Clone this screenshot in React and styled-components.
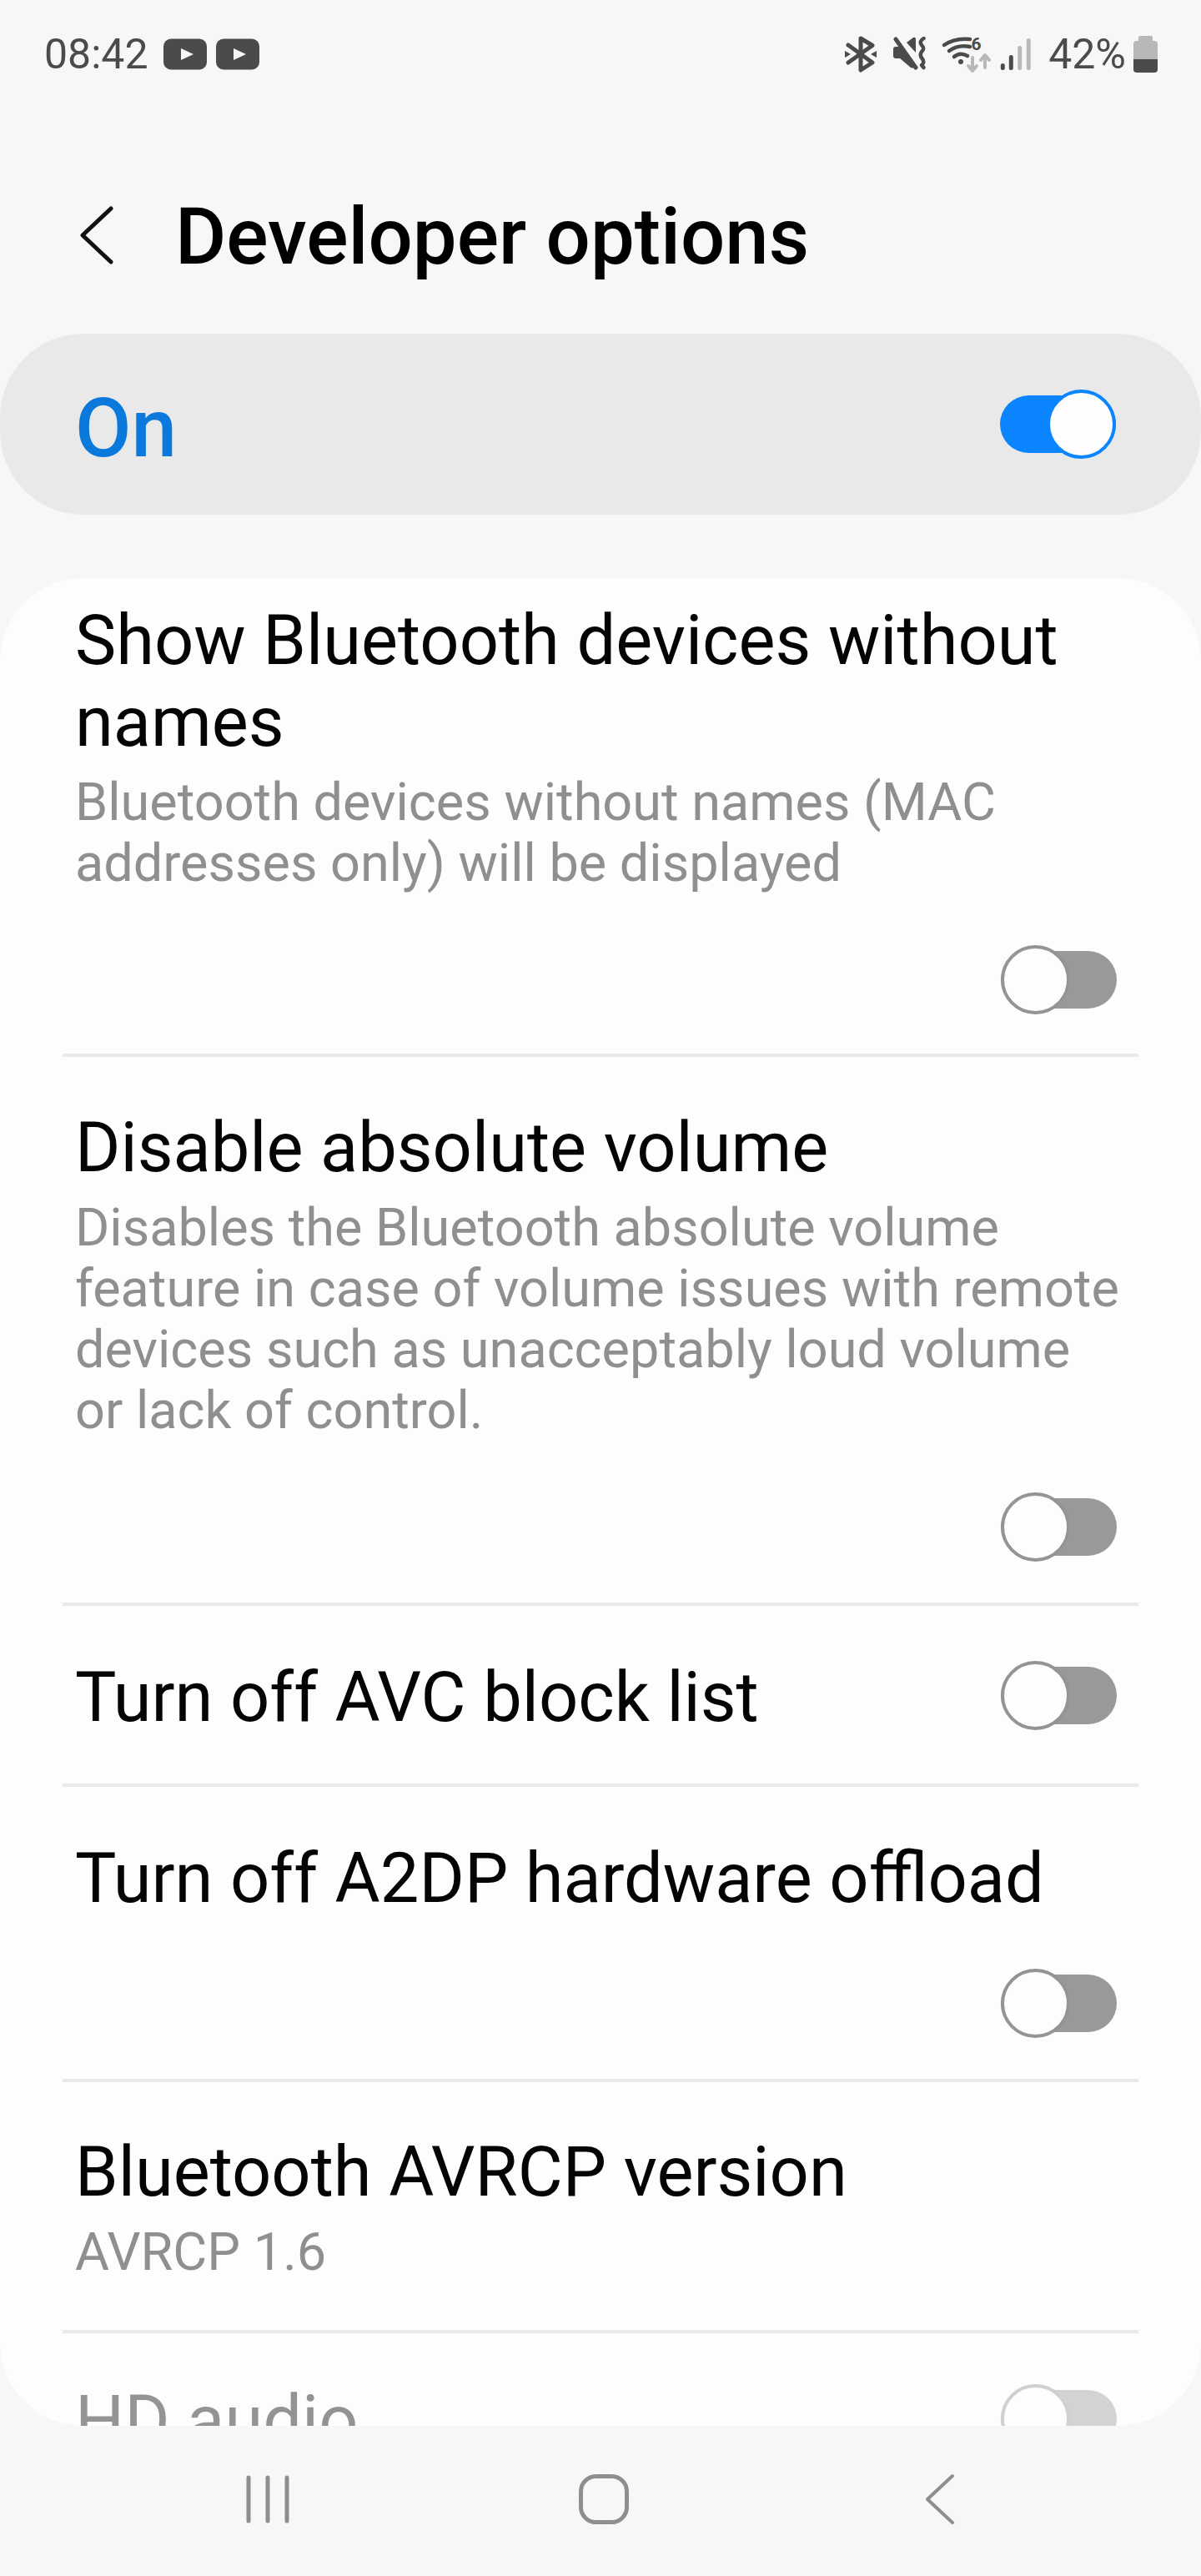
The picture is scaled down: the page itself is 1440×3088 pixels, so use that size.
import React from "react";
import styled, { createGlobalStyle } from "styled-components";

const GlobalStyle = createGlobalStyle`
  html, body {
    margin: 0;
    padding: 0;
    background-color: #f7f7f7;
  }
  * {
    box-sizing: border-box;
  }
`;

const Screen = styled.div`
  width: 1440px;
  height: 3088px;
  display: flex;
  flex-direction: column;
  overflow: hidden;
  background-color: #f7f7f7;
  font-family: "Roboto", "Liberation Sans", sans-serif;
  color: #000;
`;

const StatusBar = styled.div`
  height: 130px;
  flex: none;
  display: flex;
  align-items: center;
  justify-content: space-between;
  padding: 0 52px 0 53px;
  color: #4b4b4b;
`;

const StatusGroup = styled.div`
  display: flex;
  align-items: center;
`;

const StatusSlot = styled.div`
  display: flex;
  align-items: center;
  margin-left: ${(p) => p.$left || 0}px;
`;

const StatusText = styled.span`
  font-size: 50px;
  line-height: 60px;
  margin-left: ${(p) => p.$left || 0}px;
`;

const Header = styled.div`
  height: 270px;
  flex: none;
  display: flex;
  align-items: flex-start;
  padding: 114px 0 0 96px;
`;

const BackButton = styled.div`
  width: 114px;
  height: 76px;
  display: flex;
  align-items: center;
`;

const PageTitle = styled.h1`
  margin: 0;
  font-size: 94px;
  line-height: 80px;
  font-weight: 500;
`;

const MasterBar = styled.div`
  height: 217px;
  flex: none;
  margin-bottom: 76px;
  display: flex;
  align-items: center;
  justify-content: space-between;
  padding: 0 102px 0 90px;
  border-radius: 100px;
  background-color: #e9e9e9;
`;

const MasterLabel = styled.span`
  font-size: 98px;
  font-weight: 500;
  color: #0b78dc;
  margin-top: 10px;
`;

const Card = styled.div`
  flex: 1;
  min-height: 0;
  overflow: hidden;
  border-radius: 100px;
  background-color: #fdfdfd;
  padding: 26px 75px 0;
`;

const Row = styled.div`
  padding: ${(p) => p.$top}px 0 ${(p) => p.$bottom}px 15px;
  border-bottom: ${(p) => (p.$last ? "none" : "4px solid #e9e9e9")};
  opacity: ${(p) => (p.$dim ? 0.42 : 1)};
`;

const InlineRow = styled.div`
  display: flex;
  align-items: center;
  justify-content: space-between;
`;

const InlineToggle = styled.div`
  margin-bottom: 6px;
`;

const Title = styled.div`
  font-size: 83px;
  line-height: 98px;
  color: #040404;
`;

const Summary = styled.div`
  margin-top: 10px;
  padding-right: 16px;
  font-size: 63px;
  line-height: 73px;
  color: #8f8f8f;
`;

const ToggleLine = styled.div`
  display: flex;
  justify-content: flex-end;
  margin-top: ${(p) => p.$top}px;
`;

const Track = styled.div`
  position: relative;
  width: 139px;
  height: 69px;
  flex: none;
  margin-right: ${(p) => (p.$on ? 0 : 26)}px;
  border-radius: 35px;
  background-color: ${(p) => (p.$on ? "#0a84ff" : "#999999")};
`;

const Thumb = styled.div`
  position: absolute;
  top: -7px;
  left: ${(p) => (p.$on ? "56px" : "0")};
  width: 83px;
  height: 83px;
  border-radius: 50%;
  background-color: #fdfdfd;
  border: 4px solid ${(p) => (p.$on ? "#0a84ff" : "#949494")};
`;

const NavBar = styled.div`
  height: 180px;
  flex: none;
  display: grid;
  grid-template-columns: repeat(3, 403px);
  align-items: center;
  justify-items: center;
  padding: 0 0 4px 119px;
`;

const NavItem = styled.div`
  display: flex;
`;

const Toggle = ({ on }) => (
  <Track $on={on}>
    <Thumb $on={on} />
  </Track>
);

const YouTubeIcon = () => (
  <svg width="52" height="38" viewBox="0 0 52 38">
    <rect width="52" height="37" y="0.5" rx="9" fill="#4b4b4b" />
    <path d="M21 12v14l15-7z" fill="#f7f7f7" />
  </svg>
);

const BluetoothIcon = () => (
  <svg width="38" height="44" viewBox="0 0 38 44">
    <path d="M4 11L33 32L19 41V3L33 11.500L4 32" fill="none" stroke="#4b4b4b" strokeWidth="5" strokeLinejoin="round" strokeLinecap="round" />
    <path d="M0 18l7 4-7 4zM38 18l-7 4 7 4z" fill="#4b4b4b" />
  </svg>
);

const MuteIcon = () => (
  <svg width="40" height="42" viewBox="0 0 40 42">
    <path d="M0 15q0-3 3-3h5L25 37q-2 1-4 0L8 26H3q-3 0-3-3z" fill="#4b4b4b" />
    <path d="M16 7l8-6q3-1 3 2v16z" fill="#4b4b4b" />
    <path d="M3 3l24 34" stroke="#4b4b4b" strokeWidth="5" strokeLinecap="round" />
    <path d="M36.500 2C32 5 32 7 34 10C37 13 37 15 34 18C32 21 32 23 34.500 26C37 29 37 32 34 34L36.500 37" fill="none" stroke="#4b4b4b" strokeWidth="4.500" strokeLinecap="round" strokeLinejoin="round" />
  </svg>
);

const WifiIcon = () => (
  <svg width="58" height="44" viewBox="0 0 58 44" fill="none" strokeLinecap="round" overflow="visible">
    <path d="M2 11Q15 2 33 4M8 18Q19 10 33 13M14 25Q21 19 30 24" stroke="#4b4b4b" strokeWidth="4.500" />
    <circle cx="22" cy="31" r="3" fill="#4b4b4b" />
    <text x="34.500" y="17" fontFamily="Roboto, sans-serif" fontSize="21" fontWeight="700" fill="#4b4b4b" stroke="none">6</text>
    <path d="M36 26v15M31 36l5 6 5-6M51 38V24M46 29l5-6 5 6" stroke="#b8b8b8" strokeWidth="4" strokeLinejoin="round" />
  </svg>
);

const SignalIcon = () => (
  <svg width="38" height="40" viewBox="0 0 38 40" fill="none" strokeWidth="5" strokeLinecap="round">
    <path d="M3.300 33.500v3M13.300 23.500v13" stroke="#4b4b4b" />
    <path d="M23.700 12.500v24M34.300 3.500v33" stroke="#b8b8b8" />
  </svg>
);

const BatteryIcon = () => (
  <svg width="29" height="44" viewBox="0 0 29 44">
    <path d="M8 0h13a2 2 0 0 1 2 2v4h2a4 4 0 0 1 4 4v18H0V10a4 4 0 0 1 4-4h2V2a2 2 0 0 1 2-2z" fill="#b8b8b8" />
    <path d="M0 28h29v12a4 4 0 0 1-4 4H4a4 4 0 0 1-4-4z" fill="#4b4b4b" />
  </svg>
);

const BackChevron = ({ width, height, color, stroke }) => (
  <svg width={width} height={height} viewBox={`0 0 ${width} ${height}`} fill="none" stroke={color} strokeWidth={stroke} strokeLinecap="round" strokeLinejoin="round">
    <path d={`M${width - 3} 3L3 ${height / 2}L${width - 3} ${height - 3}`} />
  </svg>
);

const RecentsIcon = () => (
  <svg width="52" height="58" viewBox="0 0 52 58" fill="none" stroke="#8e8e8e" strokeWidth="5" strokeLinecap="round">
    <path d="M3 3v52M26 3v52M49 3v52" />
  </svg>
);

const HomeIcon = () => (
  <svg width="60" height="60" viewBox="0 0 60 60" fill="none" stroke="#8e8e8e" strokeWidth="5">
    <rect x="2.500" y="2.500" width="55" height="55" rx="18" />
  </svg>
);

function App() {
  return (
    <Screen>
      <GlobalStyle />
      <StatusBar>
        <StatusGroup>
          <StatusText>08:42</StatusText>
          <StatusSlot $left={18}><YouTubeIcon /></StatusSlot>
          <StatusSlot $left={11}><YouTubeIcon /></StatusSlot>
        </StatusGroup>
        <StatusGroup>
          <BluetoothIcon />
          <StatusSlot $left={20}><MuteIcon /></StatusSlot>
          <StatusSlot $left={19}><WifiIcon /></StatusSlot>
          <StatusSlot $left={11}><SignalIcon /></StatusSlot>
          <StatusText $left={20}>42%</StatusText>
          <StatusSlot $left={9}><BatteryIcon /></StatusSlot>
        </StatusGroup>
      </StatusBar>

      <Header>
        <BackButton>
          <BackChevron width={40} height={70} color="#111" stroke={5} />
        </BackButton>
        <PageTitle>Developer options</PageTitle>
      </Header>

      <MasterBar>
        <MasterLabel>On</MasterLabel>
        <Toggle on />
      </MasterBar>

      <Card>
        <Row $top={0} $bottom={54}>
          <Title>Show Bluetooth devices without names</Title>
          <Summary>Bluetooth devices without names (MAC addresses only) will be displayed</Summary>
          <ToggleLine $top={69}>
            <Toggle />
          </ToggleLine>
        </Row>
        <Row $top={60} $bottom={56}>
          <Title>Disable absolute volume</Title>
          <Summary>Disables the Bluetooth absolute volume feature in case of volume issues with remote devices such as unacceptably loud volume or lack of control.</Summary>
          <ToggleLine $top={69}>
            <Toggle />
          </ToggleLine>
        </Row>
        <Row $top={61} $bottom={54}>
          <InlineRow>
            <Title>Turn off AVC block list</Title>
            <InlineToggle><Toggle /></InlineToggle>
          </InlineRow>
        </Row>
        <Row $top={61} $bottom={56}>
          <Title>Turn off A2DP hardware offload</Title>
          <ToggleLine $top={66}>
            <Toggle />
          </ToggleLine>
        </Row>
        <Row $top={59} $bottom={57}>
          <Title>Bluetooth AVRCP version</Title>
          <Summary>AVRCP 1.6</Summary>
        </Row>
        <Row $top={56} $bottom={60} $dim $last>
          <InlineRow>
            <Title>HD audio</Title>
            <InlineToggle><Toggle /></InlineToggle>
          </InlineRow>
        </Row>
      </Card>

      <NavBar>
        <NavItem><RecentsIcon /></NavItem>
        <NavItem><HomeIcon /></NavItem>
        <NavItem><BackChevron width={36} height={62} color="#8e8e8e" stroke={4} /></NavItem>
      </NavBar>
    </Screen>
  );
}

export default App;
